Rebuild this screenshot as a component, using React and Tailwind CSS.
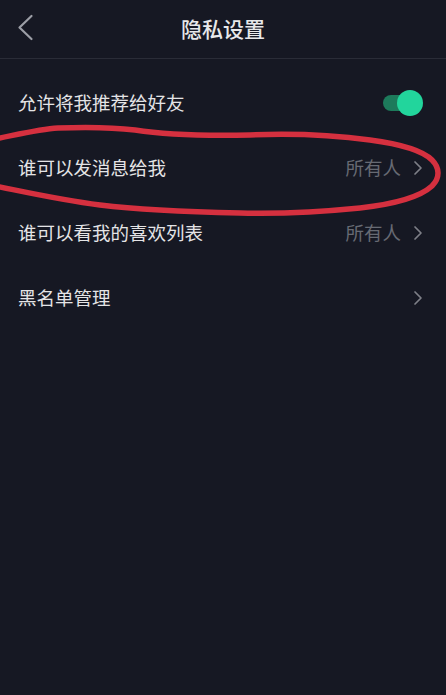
import React from "react";

function Chevron() {
  return (
    <svg width="10" height="16" viewBox="0 0 10 16" className="shrink-0">
      <path d="M2 2 L8 8 L2 14" fill="none" stroke="#7d7f87" strokeWidth="1.7" strokeLinecap="round" strokeLinejoin="round" />
    </svg>
  );
}

function Row({ label, value, right }) {
  return (
    <div className="flex h-[65px] items-center justify-between pl-[18px] pr-[23px]">
      <span className="text-[18.5px] text-[#e4e4e6]">{label}</span>
      {right ? (
        right
      ) : (
        <div className="flex items-center gap-[12px]">
          {value && <span className="text-[18.5px] text-[#676a73]">{value}</span>}
          <Chevron />
        </div>
      )}
    </div>
  );
}

export default function App() {
  return (
    <div
      className="relative h-[695px] w-[446px] overflow-hidden bg-[#161823]"
      style={{ fontFamily: '"Noto Sans CJK SC", "Noto Sans", sans-serif' }}
    >
      <div className="relative flex h-[59px] items-center justify-center border-b border-[#2a2c37]">
        <div className="absolute left-[16px] top-[14px]">
          <svg width="18" height="28" viewBox="0 0 18 28">
            <path d="M15.5 2 L3.5 13.5 L15.5 25" fill="none" stroke="#9c9ea6" strokeWidth="2.2" strokeLinecap="round" strokeLinejoin="round" />
          </svg>
        </div>
        <span className="text-[21px] font-medium text-[#e8e8ea]">隐私设置</span>
      </div>
      <div className="pt-[11px]">
        <Row
          label="允许将我推荐给好友"
          right={
            <div className="relative h-[26px] w-[40px]">
              <div className="absolute left-0 top-[5px] h-[16px] w-[30px] rounded-full bg-[#1d7a5b]" />
              <div className="absolute right-0 top-0 h-[26px] w-[26px] rounded-full bg-[#22d59c]" />
            </div>
          }
        />
        <Row label="谁可以发消息给我" value="所有人" />
        <Row label="谁可以看我的喜欢列表" value="所有人" />
        <Row label="黑名单管理" />
      </div>
      <svg className="pointer-events-none absolute left-0 top-0" width="446" height="695" viewBox="0 0 446 695">
        <path
          d="M-5 139 C 20 134, 40 129, 58 128 C 85 127, 110 127, 135 130 C 160 134, 200 136, 250 135 C 300 133, 340 136, 370 140 C 400 144, 422 150, 432 160 C 440 168, 440 178, 432 186 C 420 197, 395 204, 360 208 C 320 212, 280 214, 240 213 C 190 212, 140 210, 100 205 C 60 200, 25 192, -5 186"
          fill="none"
          stroke="#d5303f"
          strokeWidth="5.5"
          strokeLinecap="round"
          strokeLinejoin="round"
        />
      </svg>
    </div>
  );
}
